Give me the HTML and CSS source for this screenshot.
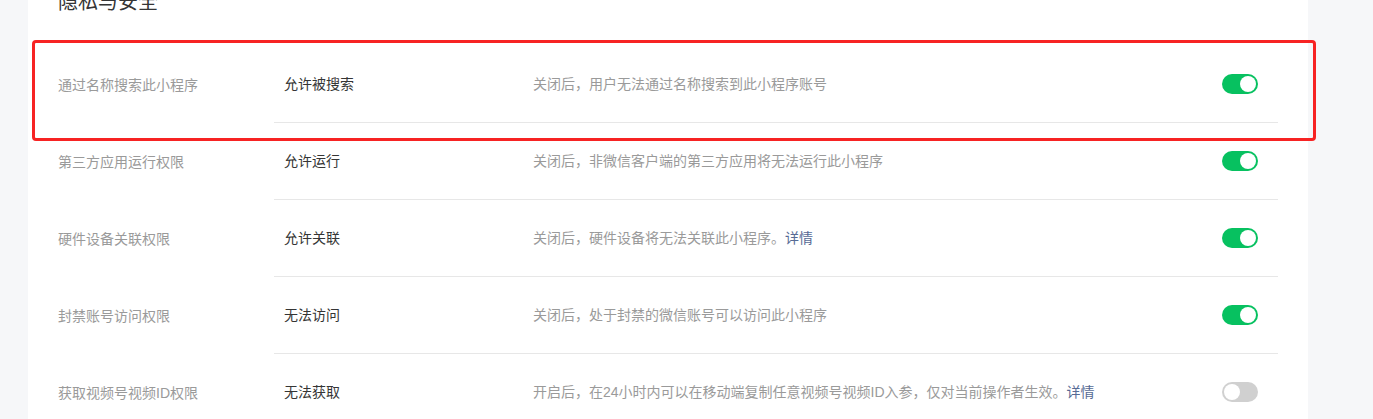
FILE: index.html
```html
<!DOCTYPE html>
<html lang="zh-CN">
<head>
  <meta charset="UTF-8">
  <meta name="viewport" content="width=device-width, initial-scale=1.0">
  <title>隐私与安全</title>
  <link rel="stylesheet" href="styles.css">
</head>
<body>
  <div class="page">
    <div class="card">
      <h2 class="card-title">隐私与安全</h2>

      <div class="row">
        <div class="row-label">通过名称搜索此小程序</div>
        <div class="row-body">
          <div class="row-value">允许被搜索</div>
          <div class="row-desc">关闭后，用户无法通过名称搜索到此小程序账号</div>
          <span class="switch on"><span class="knob"></span></span>
        </div>
        <div class="highlight"></div>
      </div>

      <div class="row">
        <div class="row-label">第三方应用运行权限</div>
        <div class="row-body">
          <div class="row-value">允许运行</div>
          <div class="row-desc">关闭后，非微信客户端的第三方应用将无法运行此小程序</div>
          <span class="switch on"><span class="knob"></span></span>
        </div>
      </div>

      <div class="row">
        <div class="row-label">硬件设备关联权限</div>
        <div class="row-body">
          <div class="row-value">允许关联</div>
          <div class="row-desc">关闭后，硬件设备将无法关联此小程序。<a href="#" class="link">详情</a></div>
          <span class="switch on"><span class="knob"></span></span>
        </div>
      </div>

      <div class="row">
        <div class="row-label">封禁账号访问权限</div>
        <div class="row-body">
          <div class="row-value">无法访问</div>
          <div class="row-desc">关闭后，处于封禁的微信账号可以访问此小程序</div>
          <span class="switch on"><span class="knob"></span></span>
        </div>
      </div>

      <div class="row">
        <div class="row-label">获取视频号视频ID权限</div>
        <div class="row-body">
          <div class="row-value">无法获取</div>
          <div class="row-desc">开启后，在24小时内可以在移动端复制任意视频号视频ID入参，仅对当前操作者生效。<a href="#" class="link">详情</a></div>
          <span class="switch"><span class="knob"></span></span>
        </div>
      </div>
    </div>
  </div>
</body>
</html>
```

FILE: styles.css
```css
body {
  margin: 0;
  background-color: #f6f7f9;
  font-family: "Liberation Sans", "Noto Sans CJK SC", sans-serif;
  font-size: 14px;
  color: #353535;
  overflow: hidden;
}
.page {
  margin-top: -40px;
  padding: 0 65px 0 28px;
}
.card {
  background-color: #fff;
  padding: 28px 30px 0;
}
.card-title {
  margin: 0 0 30px;
  font-size: 20px;
  line-height: 28px;
  font-weight: normal;
  color: #353535;
}
.row {
  position: relative;
  display: flex;
}
.row-label {
  width: 216px;
  display: flex;
  align-items: center;
  line-height: 20px;
  color: #9a9a9a;
}
.row-body {
  flex: 1;
  display: flex;
  align-items: center;
  height: 76px;
  padding: 0 20px 0 10px;
  border-bottom: 1px solid #e7e7e7;
  line-height: 20px;
}
.row-value {
  width: 249px;
  color: #353535;
}
.row-desc {
  flex: 1;
  color: #9a9a9a;
}
.link {
  color: #576b95;
  text-decoration: none;
}
.switch {
  display: flex;
  align-items: center;
  justify-content: flex-start;
  box-sizing: border-box;
  width: 36px;
  height: 20px;
  padding: 0 2px;
  border-radius: 10px;
  background-color: #d0d0d0;
}
.switch.on {
  justify-content: flex-end;
  background-color: #07c160;
}
.knob {
  width: 16px;
  height: 16px;
  border-radius: 50%;
  background-color: #fff;
}
.highlight {
  position: absolute;
  left: -26px;
  top: -6px;
  right: -38px;
  bottom: -18px;
  border: 3px solid #f72323;
  border-radius: 4px;
  pointer-events: none;
}
```
